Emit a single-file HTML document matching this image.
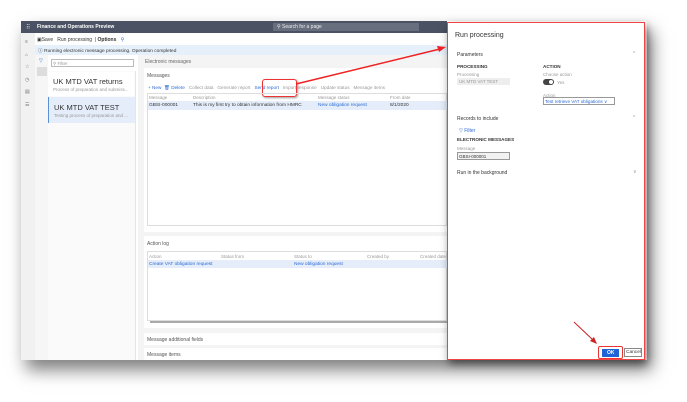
<!DOCTYPE html><html><head><style>
body{margin:0;width:687px;height:402px;background:#fff;position:relative;overflow:hidden;font-family:"Liberation Sans",sans-serif;}
.a{position:absolute;white-space:nowrap}
.t{font-size:5px;color:#333}
.g{color:#999}
.b{color:#2b6bd6}
</style></head><body>
<div class="a" style="left:21px;top:21px;width:626px;height:339px;background:#fff;box-shadow:5px 10px 16px rgba(0,0,0,.5)"></div>
<div class="a" style="left:21px;top:21px;width:426px;height:12px;background:#4b5263"></div>
<div class="a t" style="left:26px;top:24px;color:#ddd;font-size:6px">⠿</div>
<div class="a t" style="left:37px;top:24px;color:#fff;font-weight:bold">Finance and Operations Preview</div>
<div class="a" style="left:273px;top:23px;width:146px;height:8px;background:#676e7d"></div>
<div class="a t" style="left:277px;top:24px;color:#eee">⚲ Search for a page</div>
<div class="a" style="left:21px;top:33px;width:14px;height:327px;background:#f1f1f1"></div>
<div class="a t" style="left:25px;top:36px;color:#777;line-height:12.5px">≡<br>⌂<br>☆<br>◷<br>▤<br>☰</div>
<div class="a t" style="left:37px;top:37px">▣Save &nbsp; Run processing &nbsp;| <b>Options</b> &nbsp; <span class="b">⚲</span></div>
<div class="a" style="left:35px;top:45px;width:412px;height:10px;background:#e6f0fb"></div>
<div class="a t" style="left:38px;top:47px;font-size:4.8px">ⓘ Running electronic message processing. Operation completed</div>
<div class="a" style="left:35px;top:55px;width:13px;height:305px;background:#f6f6f6"></div>
<div class="a t b" style="left:39px;top:58px">▽</div>
<div class="a" style="left:37px;top:67px;width:10px;height:9px;background:#ddd"></div>
<div class="a" style="left:51px;top:59px;width:83px;height:8px;border:1px solid #bbb;box-sizing:border-box"></div>
<div class="a t g" style="left:53px;top:61px;font-size:4.5px">⚲ Filter</div>
<div class="a" style="left:48px;top:71px;width:87px;height:289px;background:#fafafa;border-right:1px solid #e5e5e5"></div>
<div class="a" style="left:48px;top:72px;width:86px;height:24px;background:#fff"></div>
<div class="a" style="left:53px;top:77px;font-size:7.5px;color:#333">UK MTD VAT returns</div>
<div class="a t g" style="left:53px;top:87px;font-size:4.5px">Process of preparation and submiss...</div>
<div class="a" style="left:48px;top:97px;width:87px;height:26px;background:#e4edf9;border-left:1.5px solid #5b8fd6;box-sizing:border-box"></div>
<div class="a" style="left:54px;top:103px;font-size:7.5px;color:#333">UK MTD VAT TEST</div>
<div class="a t g" style="left:54px;top:113px;font-size:4.5px">Testing process of preparation and ...</div>
<div class="a" style="left:138px;top:55px;width:309px;height:305px;background:#f4f4f4"></div>
<div class="a t" style="left:145px;top:59px;color:#666">Electronic messages</div>
<div class="a" style="left:144px;top:68px;width:303px;height:164px;background:#fff"></div>
<div class="a t" style="left:147px;top:73px;color:#555">Messages</div>
<div class="a t" style="left:148px;top:85px;font-size:4.7px"><span class="b">+ New &nbsp;🗑 Delete</span> &nbsp; <span class="g">Collect data &nbsp; Generate report</span> &nbsp; <span class="b">Send report</span> &nbsp; <span class="g">Import response &nbsp; Update status &nbsp; Message items</span></div>
<div class="a" style="left:262px;top:79px;width:33px;height:16px;border:1.5px solid #e33;border-radius:3px;box-shadow:1px 1px 2px rgba(0,0,0,.4)"></div>
<div class="a" style="left:147px;top:93px;width:300px;height:133px;border:1px solid #ddd;box-sizing:border-box"></div>
<div class="a t g" style="left:149px;top:95px;font-size:4.5px">Message</div>
<div class="a t g" style="left:193px;top:95px;font-size:4.5px">Description</div>
<div class="a t g" style="left:318px;top:95px;font-size:4.5px">Message status</div>
<div class="a t g" style="left:390px;top:95px;font-size:4.5px">From date</div>
<div class="a" style="left:148px;top:101px;width:299px;height:9px;background:#e4edf9"></div>
<div class="a t" style="left:149px;top:103px;font-size:4.8px">GBSI-000001</div>
<div class="a t" style="left:193px;top:103px;font-size:4.8px">This is my first try to obtain information from HMRC</div>
<div class="a t b" style="left:318px;top:103px;font-size:4.8px">New obligation request</div>
<div class="a t" style="left:390px;top:103px;font-size:4.8px">8/1/2020</div>
<div class="a" style="left:144px;top:236px;width:303px;height:92px;background:#fff"></div>
<div class="a t" style="left:147px;top:241px;color:#555">Action log</div>
<div class="a" style="left:147px;top:251px;width:300px;height:70px;border:1px solid #ddd;box-sizing:border-box"></div>
<div class="a t g" style="left:149px;top:254px;font-size:4.5px">Action</div>
<div class="a t g" style="left:221px;top:254px;font-size:4.5px">Status from</div>
<div class="a t g" style="left:294px;top:254px;font-size:4.5px">Status to</div>
<div class="a t g" style="left:367px;top:254px;font-size:4.5px">Created by</div>
<div class="a t g" style="left:420px;top:254px;font-size:4.5px">Created date</div>
<div class="a" style="left:148px;top:260px;width:299px;height:8px;background:#e4edf9"></div>
<div class="a t b" style="left:149px;top:262px;font-size:4.8px">Create VAT obligation request</div>
<div class="a t b" style="left:294px;top:262px;font-size:4.8px">New obligation request</div>
<div class="a" style="left:150px;top:321px;width:297px;height:2px;background:#aaa"></div>
<div class="a" style="left:144px;top:333px;width:303px;height:12px;background:#fff"></div>
<div class="a t" style="left:147px;top:337px;color:#555">Message additional fields</div>
<div class="a" style="left:144px;top:348px;width:303px;height:12px;background:#fff"></div>
<div class="a t" style="left:147px;top:352px;color:#555">Message items</div>
<div class="a" style="left:447px;top:22px;width:198px;height:338px;background:#fff;border:1.5px solid #e44;box-sizing:border-box;box-shadow:2px 4px 8px rgba(0,0,0,.5)"></div>
<div class="a" style="left:455px;top:32px;font-size:7px;color:#333">Run processing</div>
<div class="a t" style="left:457px;top:52px">Parameters</div><div class="a t g" style="left:633px;top:51px">^</div>
<div class="a t" style="left:457px;top:64px;font-weight:bold;font-size:4.6px">PROCESSING</div>
<div class="a t" style="left:543px;top:64px;font-weight:bold;font-size:4.6px">ACTION</div>
<div class="a t g" style="left:457px;top:72px;font-size:4.5px">Processing</div>
<div class="a" style="left:457px;top:78px;width:53px;height:7px;background:#eee"></div>
<div class="a t g" style="left:459px;top:79px;font-size:4.5px">UK MTD VAT TEST</div>
<div class="a t g" style="left:543px;top:72px;font-size:4.5px">Choose action</div>
<div class="a" style="left:543px;top:79px;width:11px;height:6px;border-radius:3px;background:#444"></div>
<div class="a" style="left:549px;top:80px;width:4px;height:4px;border-radius:2px;background:#fff"></div>
<div class="a t g" style="left:557px;top:80px;font-size:4.5px">Yes</div>
<div class="a t g" style="left:543px;top:93px;font-size:4.5px">Action</div>
<div class="a" style="left:543px;top:97px;width:72px;height:8px;border:1px solid #999;box-sizing:border-box"></div>
<div class="a t b" style="left:545px;top:99px;font-size:4.6px">Test retrieve VAT obligations ∨</div>
<div class="a t" style="left:457px;top:116px">Records to include</div><div class="a t g" style="left:633px;top:115px">^</div>
<div class="a t b" style="left:459px;top:128px">▽ Filter</div>
<div class="a t" style="left:457px;top:137px;font-weight:bold;font-size:4.6px">ELECTRONIC MESSAGES</div>
<div class="a t g" style="left:457px;top:146px;font-size:4.5px">Message</div>
<div class="a" style="left:457px;top:152px;width:53px;height:8px;background:#f2f2f2;border:1px solid #999;box-sizing:border-box"></div>
<div class="a t" style="left:459px;top:154px;font-size:4.5px">GBSI-000001</div>
<div class="a t" style="left:457px;top:170px">Run in the background</div><div class="a t g" style="left:633px;top:169px">∨</div>
<div class="a" style="left:598px;top:346px;width:25px;height:13px;border:1.5px solid #e33;border-radius:2px;box-sizing:border-box"></div>
<div class="a" style="left:602px;top:349px;width:17px;height:8px;background:#1f63d6"></div>
<div class="a" style="left:607px;top:350px;font-size:5px;color:#fff;font-weight:bold">OK</div>
<div class="a" style="left:624px;top:348px;width:18px;height:9px;border:1px solid #888;box-sizing:border-box"></div>
<div class="a t" style="left:626px;top:350px;font-size:4.8px">Cancel</div>
<svg class="a" style="left:0;top:0" width="687" height="402">
<line x1="296" y1="84" x2="440" y2="49" stroke="#e22" stroke-width="1.5"/><polygon points="446,47 437,46 439,52" fill="#e22"/>
<line x1="574" y1="322" x2="593" y2="340" stroke="#c22" stroke-width="1"/><polygon points="597,344 590,341 594,337" fill="#c22"/>
</svg>
</body></html>
